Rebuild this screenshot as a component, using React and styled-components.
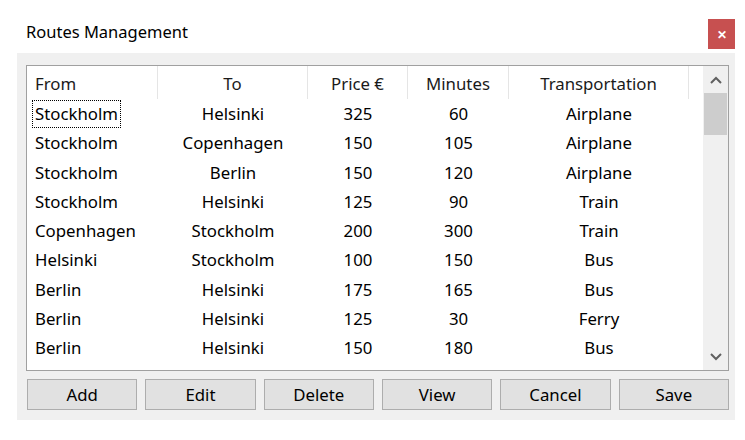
import React from 'react';
import styled, { createGlobalStyle } from 'styled-components';

const GlobalStyle = createGlobalStyle`
    body {
        margin: 0;
        background: #ffffff;
        font-family: "Noto Sans", "Open Sans", sans-serif;
        color: #000000;
    }
`

const routes = [
    ['Stockholm', 'Helsinki', 325, 60, 'Airplane'],
    ['Stockholm', 'Copenhagen', 150, 105, 'Airplane'],
    ['Stockholm', 'Berlin', 150, 120, 'Airplane'],
    ['Stockholm', 'Helsinki', 125, 90, 'Train'],
    ['Copenhagen', 'Stockholm', 200, 300, 'Train'],
    ['Helsinki', 'Stockholm', 100, 150, 'Bus'],
    ['Berlin', 'Helsinki', 175, 165, 'Bus'],
    ['Berlin', 'Helsinki', 125, 30, 'Ferry'],
    ['Berlin', 'Helsinki', 150, 180, 'Bus'],
]

const headers = ['From', 'To', 'Price €', 'Minutes', 'Transportation']
const buttons = ['Add', 'Edit', 'Delete', 'View', 'Cancel', 'Save']

function Chevron({ up }) {
    return (
        <svg width="12" height="8" viewBox="0 0 12 8">
            <path
                d={up ? 'M1 7 L6 2 L11 7' : 'M1 1 L6 6 L11 1'}
                fill="none"
                stroke="#606060"
                strokeWidth="2"
            />
        </svg>
    )
}

function App() {
    return (
        <Window>
            <GlobalStyle />
            <TitleBar>
                <Title>Routes Management</Title>
                <CloseButton>✕</CloseButton>
            </TitleBar>
            <Panel>
                <TableBox>
                    <Table>
                        <HeaderRow>
                            {headers.map((h, i) => (
                                <HeaderCell key={h} left={i === 0}>{h}</HeaderCell>
                            ))}
                            <HeaderCell last />
                        </HeaderRow>
                        {routes.map((r, ri) => (
                            <Row key={ri}>
                                {r.map((v, ci) => (
                                    <Cell key={ci} left={ci === 0}>
                                        {ri === 0 && ci === 0 ? <Focus>{v}</Focus> : v}
                                    </Cell>
                                ))}
                                <Cell />
                            </Row>
                        ))}
                    </Table>
                    <ScrollBar>
                        <Arrow><Chevron up /></Arrow>
                        <Thumb />
                        <Track />
                        <Arrow><Chevron /></Arrow>
                    </ScrollBar>
                </TableBox>
                <ButtonRow>
                    {buttons.map(b => <Button key={b}>{b}</Button>)}
                </ButtonRow>
            </Panel>
        </Window>
    )
}

export default App

const Window = styled.div`
    width: 745px;
    height: 440px;
    display: flex;
    flex-direction: column;
`

const TitleBar = styled.div`
    display: flex;
    align-items: center;
    justify-content: space-between;
    height: 30px;
    margin: 19px 10px 4px 26px;
`

const Title = styled.span`
    font-size: 16.5px;
    margin-top: -5px;
`

const CloseButton = styled.div`
    width: 27px;
    height: 30px;
    background: #c75050;
    color: #ffffff;
    font-size: 12px;
    font-weight: 700;
    display: flex;
    align-items: center;
    justify-content: center;
`

const Panel = styled.div`
    margin-left: 17px;
    width: 718px;
    background: #f0f0f0;
    padding: 12px 6px 10px 9px;
    box-sizing: border-box;
    display: flex;
    flex-direction: column;
    gap: 8px;
`

const TableBox = styled.div`
    height: 306px;
    border: 1px solid #a0a0a0;
    background: #ffffff;
    box-sizing: border-box;
    display: flex;
`

const Table = styled.div`
    flex: 1;
    display: flex;
    flex-direction: column;
`

const HeaderRow = styled.div`
    display: grid;
    grid-template-columns: 131px 150px 100px 101px 180px 1fr;
    height: 33px;
`

const HeaderCell = styled.div`
    display: flex;
    align-items: center;
    justify-content: ${p => p.left ? 'flex-start' : 'center'};
    padding-left: ${p => p.left ? '8px' : '0'};
    padding-top: 2px;
    font-size: 16.8px;
    color: #1a1a1a;
    border-right: ${p => p.last ? 'none' : '1px solid #e5e5e5'};
`

const Row = styled.div`
    display: grid;
    grid-template-columns: 131px 150px 100px 101px 180px 1fr;
    height: 29.25px;
`

const Cell = styled.div`
    display: flex;
    align-items: center;
    justify-content: ${p => p.left ? 'flex-start' : 'center'};
    padding-left: ${p => p.left ? '8px' : '0'};
    font-size: 16.8px;
`

const Focus = styled.span`
    border: 1px dotted #000000;
    margin-left: -3px;
    padding: 1px 2px 2px 2px;
`

const ScrollBar = styled.div`
    width: 25px;
    background: #f0f0f0;
    display: flex;
    flex-direction: column;
`

const Arrow = styled.div`
    height: 27px;
    display: flex;
    align-items: center;
    justify-content: center;
`

const Thumb = styled.div`
    height: 42px;
    margin: 0 1px;
    background: #cdcdcd;
`

const Track = styled.div`
    flex: 1;
`

const ButtonRow = styled.div`
    display: flex;
    gap: 8px;
    padding-left: 1px;
`

const Button = styled.button`
    flex: 1;
    height: 31px;
    background: #e1e1e1;
    border: 1px solid #adadad;
    font-family: "Noto Sans", "Open Sans", sans-serif;
    font-size: 16.8px;
    color: #000000;
    padding: 0 0 1px 0;
`
